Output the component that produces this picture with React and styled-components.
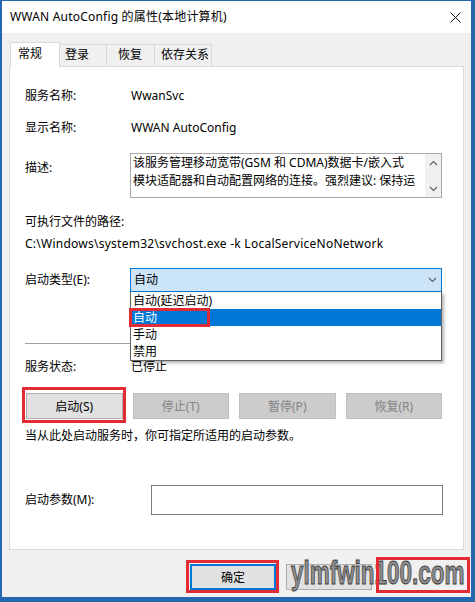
import React from 'react';
import styled, { createGlobalStyle, css } from 'styled-components';

const Global = createGlobalStyle`
  html, body { margin: 0; padding: 0; background: #fff; }
  body {
    font-family: "Noto Sans", "Noto Sans CJK SC", sans-serif;
    font-size: 12px;
    color: #000;
  }
`

const Window = styled.div`
  position: relative;
  width: 475px;
  height: 602px;
  box-sizing: border-box;
  border-style: solid;
  border-color: #2466b0;
  border-width: 1px 4px 5px 2px;
  background: #f0f0f0;
  display: flex;
  flex-direction: column;
`

const TitleBar = styled.div`
  height: 32px;
  flex: none;
  background: #fff;
  display: flex;
  align-items: center;
  justify-content: space-between;
  padding: 0 10px 0 8px;
`

const Title = styled.span`
  font-size: 12px;
  line-height: 16px;
  letter-spacing: 0.2px;
`

const Body = styled.div`
  padding: 9px 7px 0 7px;
`

const TabBar = styled.div`
  display: flex;
  align-items: flex-end;
  height: 24px;
  margin-left: 1px;
`

const Tab = styled.div`
  box-sizing: border-box;
  width: ${p => p.w}px;
  height: 22px;
  border: 1px solid #d9d9d9;
  border-bottom: none;
  margin-left: -1px;
  padding-left: ${p => p.pad}px;
  line-height: 20px;
  background: #f0f0f0;
  ${p => p.active && css`
    height: 25px;
    margin-bottom: -1px;
    background: #fff;
    position: relative;
    z-index: 1;
    margin-left: 0;
    padding-top: 1px;
  `}
`

const Panel = styled.div`
  box-sizing: border-box;
  height: 484px;
  border: 1px solid #d9d9d9;
  background: #fff;
  padding: 13px 21px 0 15px;
  display: flex;
  flex-direction: column;
`

const Row = styled.div`
  display: flex;
  align-items: ${p => p.top ? 'flex-start' : 'center'};
  height: ${p => p.h ? p.h + 'px' : 'auto'};
  margin-top: ${p => p.mt || 0}px;
  line-height: 16px;
`

const Label = styled.div`
  width: ${p => p.w || 105}px;
  flex: none;
  padding-top: ${p => p.pt || 0}px;
`

const Value = styled.div`
  padding-left: 1px;
`

const Line = styled.div`
  line-height: 16px;
  margin-top: ${p => p.mt || 0}px;
  white-space: nowrap;
  letter-spacing: ${p => p.ls || 0}px;
`

const DescBox = styled.div`
  flex: 1;
  height: 45px;
  box-sizing: border-box;
  border: 1px solid #a8a8a8;
  display: flex;
  overflow: hidden;
`

const DescText = styled.div`
  flex: 1;
  padding: 0 2px;
  line-height: 18px;
  overflow: hidden;
  white-space: nowrap;
`

const ScrollBar = styled.div`
  width: 16px;
  background: #f0f0f0;
  display: flex;
  flex-direction: column;
  justify-content: space-between;
  align-items: center;
  padding: 6px 0 5px;
`

const ComboWrap = styled.div`
  position: relative;
  flex: 1;
`

const Combo = styled.div`
  box-sizing: border-box;
  height: 24px;
  background: #cce4f7;
  border: 1px solid #0078d7;
  display: flex;
  align-items: center;
  justify-content: space-between;
  padding: 0 4px 0 3px;
`

const DropList = styled.div`
  position: absolute;
  left: 0;
  right: 0;
  top: 24px;
  height: 69px;
  box-sizing: border-box;
  background: #fff;
  border: 1px solid #646464;
  border-top: none;
  box-shadow: 2px 2px 3px rgba(0, 0, 0, 0.3);
  z-index: 2;
`

const Option = styled.div`
  position: relative;
  height: 17px;
  line-height: 17px;
  padding-left: 2px;
  ${p => p.selected && css`
    background: #0078d7;
    color: #fff;
  `}
`

const RedFrame = styled.div`
  position: absolute;
  border: 3px solid #e32b35;
  pointer-events: none;
  z-index: 3;
  top: ${p => p.t}px;
  left: ${p => p.l}px;
  width: ${p => p.w}px;
  height: ${p => p.h}px;
  box-sizing: border-box;
`

const Separator = styled.div`
  height: 1px;
  background: #a0a0a0;
  margin-top: ${p => p.mt}px;
`

const ButtonRow = styled.div`
  display: grid;
  grid-template-columns: repeat(4, 1fr);
  column-gap: 10px;
  margin: 18px 0 0 1px;
`

const Button = styled.div`
  position: relative;
  box-sizing: border-box;
  height: 26px;
  width: ${p => p.w ? p.w + 'px' : 'auto'};
  background: #e1e1e1;
  border: 1px solid #adadad;
  display: flex;
  align-items: center;
  justify-content: center;
  ${p => p.disabled && css`
    background: #cccccc;
    border-color: #bfbfbf;
    color: #838383;
  `}
  ${p => p.primary && css`
    border: 2px solid #0078d7;
  `}
`

const Input = styled.div`
  flex: 1;
  margin-left: 20px;
  height: 30px;
  box-sizing: border-box;
  border: 1px solid #7a7a7a;
  margin-right: -1px;
`

const Footer = styled.div`
  position: relative;
  flex: 1;
  display: flex;
  gap: 10px;
  padding: 14px 0 0 188px;
`

const Watermark = styled.div`
  position: absolute;
  left: 289px;
  top: 2px;
  font-family: "Liberation Sans", Arial, sans-serif;
  font-weight: bold;
  font-size: 34px;
  line-height: 40px;
  color: #8e8e8e;
  -webkit-text-stroke: 1px #3b3b3b;
  text-shadow: 0 0 2px #fff, 0 0 3px #ddd;
  transform: scaleX(0.66);
  transform-origin: left top;
  white-space: nowrap;
  z-index: 2;
`

const Chevron = ({ up }) => (
  <svg width="9" height="6" viewBox="0 0 9 6">
    <polyline
      points={up ? '1,5 4.5,1.5 8,5' : '1,1 4.5,4.5 8,1'}
      fill="none"
      stroke="#606060"
      strokeWidth="1.2"
    />
  </svg>
)

const CloseIcon = () => (
  <svg width="11" height="11" viewBox="0 0 11 11">
    <path d="M0.5 0.5 L10.5 10.5 M10.5 0.5 L0.5 10.5" stroke="#111" strokeWidth="1" />
  </svg>
)

const tabs = [
  { name: '常规', w: 50, pad: 7, active: true },
  { name: '登录', w: 48, pad: 5 },
  { name: '恢复', w: 49, pad: 11 },
  { name: '依存关系', w: 58, pad: 6 },
]

const options = ['自动(延迟启动)', '自动', '手动', '禁用']

export default function App() {
  return (
    <>
      <Global />
      <Window>
        <TitleBar>
          <Title>WWAN AutoConfig 的属性(本地计算机)</Title>
          <CloseIcon />
        </TitleBar>
        <Body>
          <TabBar>
            {tabs.map(t => (
              <Tab key={t.name} w={t.w} pad={t.pad} active={t.active}>{t.name}</Tab>
            ))}
          </TabBar>
          <Panel>
            <Row h={32}>
              <Label>服务名称:</Label>
              <Value>WwanSvc</Value>
            </Row>
            <Row h={32}>
              <Label>显示名称:</Label>
              <Value>WWAN AutoConfig</Value>
            </Row>
            <Row top mt={9}>
              <Label pt={7}>描述:</Label>
              <DescBox>
                <DescText>
                  <div>该服务管理移动宽带(GSM 和 CDMA)数据卡/嵌入式</div>
                  <div>模块适配器和自动配置网络的连接。强烈建议: 保持运</div>
                </DescText>
                <ScrollBar>
                  <Chevron up />
                  <Chevron />
                </ScrollBar>
              </DescBox>
            </Row>
            <Line mt={16}>可执行文件的路径:</Line>
            <Line mt={6} ls={0.25}>C:\Windows\system32\svchost.exe -k LocalServiceNoNetwork</Line>
            <Row mt={16}>
              <Label>启动类型(E):</Label>
              <ComboWrap>
                <Combo>
                  <span>自动</span>
                  <Chevron />
                </Combo>
                <DropList>
                  {options.map((o, i) => (
                    <Option key={i} selected={i === 1}>{o}</Option>
                  ))}
                  <RedFrame t={16} l={-2} w={81} h={19} />
                </DropList>
              </ComboWrap>
            </Row>
            <Separator mt={51} />
            <Row mt={15}>
              <Label>服务状态:</Label>
              <Value>已停止</Value>
            </Row>
            <ButtonRow>
              <Button>
                启动(S)
                <RedFrame t={-7} l={-5} w={104} h={36} />
              </Button>
              <Button disabled>停止(T)</Button>
              <Button disabled>暂停(P)</Button>
              <Button disabled>恢复(R)</Button>
            </ButtonRow>
            <Line mt={9}>当从此处启动服务时，你可指定所适用的启动参数。</Line>
            <Row mt={41}>
              <Label w={106}>启动参数(M):</Label>
              <Input />
            </Row>
          </Panel>
        </Body>
        <Footer>
          <Button primary w={86}>
            确定
            <RedFrame t={-6} l={-6} w={93} h={33} />
          </Button>
          <Button w={86} />
          <Watermark>ylmfwin100.com</Watermark>
          <RedFrame t={7} l={374} w={94} h={36} />
        </Footer>
      </Window>
    </>
  )
}
